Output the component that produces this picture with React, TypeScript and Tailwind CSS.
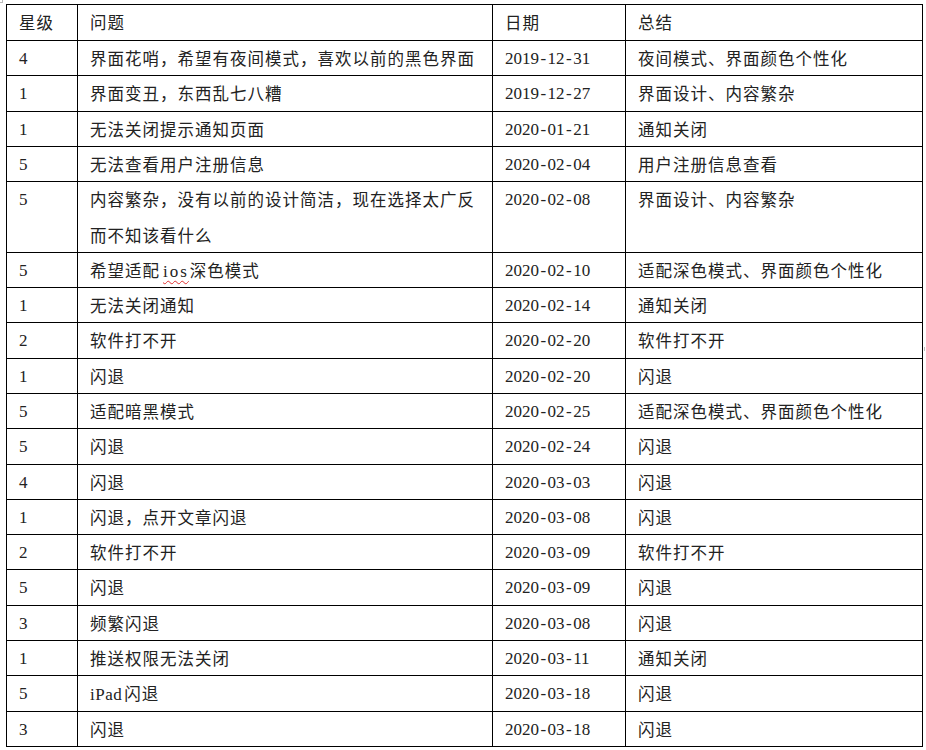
import React from "react";

type Row = { star: string; issue: React.ReactNode; date: string; sum: string; tall?: boolean };

function Ascii({ text }: { text: string }) {
  const bits = text.split(/(-)/);
  return (
    <span className="font-['Liberation_Serif',serif] text-[17px]">
      {bits.map((b, i) =>
        b === "-" ? (
          <span key={i} className="inline-block w-[8.6px] text-center">-</span>
        ) : (
          <React.Fragment key={i}>{b}</React.Fragment>
        )
      )}
    </span>
  );
}

function T({ text }: { text: string }) {
  const parts = text.match(/[\x20-\x7e]+|[^\x20-\x7e]+/g) || [];
  return (
    <>
      {parts.map((p, i) =>
        /^[\x20-\x7e]+$/.test(p) ? (
          <Ascii key={i} text={p} />
        ) : (
          <span key={i} className="font-['Noto_Sans_CJK_SC',sans-serif] text-[16.5px] tracking-[1px]">
            {p}
          </span>
        )
      )}
    </>
  );
}

const rows: Row[] = [
  { star: "4", issue: <T text="界面花哨，希望有夜间模式，喜欢以前的黑色界面" />, date: "2019-12-31", sum: "夜间模式、界面颜色个性化" },
  { star: "1", issue: <T text="界面变丑，东西乱七八糟" />, date: "2019-12-27", sum: "界面设计、内容繁杂" },
  { star: "1", issue: <T text="无法关闭提示通知页面" />, date: "2020-01-21", sum: "通知关闭" },
  { star: "5", issue: <T text="无法查看用户注册信息" />, date: "2020-02-04", sum: "用户注册信息查看" },
  {
    star: "5",
    issue: (
      <>
        <T text="内容繁杂，没有以前的设计简洁，现在选择太广反" />
        <br />
        <T text="而不知该看什么" />
      </>
    ),
    date: "2020-02-08",
    sum: "界面设计、内容繁杂",
    tall: true,
  },
  {
    star: "5",
    issue: (
      <>
        <T text="希望适配" />
        <span className="font-['Liberation_Serif',serif] text-[17px] ml-[3px] mr-[1px] tracking-[2px] underline decoration-wavy decoration-[#e03030] decoration-1 underline-offset-[3px]">
          ios
        </span>
        <T text="深色模式" />
      </>
    ),
    date: "2020-02-10",
    sum: "适配深色模式、界面颜色个性化",
  },
  { star: "1", issue: <T text="无法关闭通知" />, date: "2020-02-14", sum: "通知关闭" },
  { star: "2", issue: <T text="软件打不开" />, date: "2020-02-20", sum: "软件打不开" },
  { star: "1", issue: <T text="闪退" />, date: "2020-02-20", sum: "闪退" },
  { star: "5", issue: <T text="适配暗黑模式" />, date: "2020-02-25", sum: "适配深色模式、界面颜色个性化" },
  { star: "5", issue: <T text="闪退" />, date: "2020-02-24", sum: "闪退" },
  { star: "4", issue: <T text="闪退" />, date: "2020-03-03", sum: "闪退" },
  { star: "1", issue: <T text="闪退，点开文章闪退" />, date: "2020-03-08", sum: "闪退" },
  { star: "2", issue: <T text="软件打不开" />, date: "2020-03-09", sum: "软件打不开" },
  { star: "5", issue: <T text="闪退" />, date: "2020-03-09", sum: "闪退" },
  { star: "3", issue: <T text="频繁闪退" />, date: "2020-03-08", sum: "闪退" },
  { star: "1", issue: <T text="推送权限无法关闭" />, date: "2020-03-11", sum: "通知关闭" },
  {
    star: "5",
    issue: (
      <>
        <span className="font-['Liberation_Serif',serif] text-[17px] tracking-[0.5px] mr-[2px]">iPad</span>
        <T text="闪退" />
      </>
    ),
    date: "2020-03-18",
    sum: "闪退",
  },
  { star: "3", issue: <T text="闪退" />, date: "2020-03-18", sum: "闪退" },
];

const cell = "border-r border-b border-black pl-[12px] leading-[35.3px] text-[#222] whitespace-nowrap overflow-hidden";

export default function App() {
  return (
    <div className="w-[926px] h-[750px] bg-white relative overflow-hidden">
      <div className="pt-[4px] pl-[6px]">
        <div className="grid grid-cols-[71px_415px_133px_297px] w-[917px] border-l border-t border-black">
          <div className={`${cell} h-[36px] leading-[35px]`}><T text="星级" /></div>
          <div className={`${cell} h-[36px] leading-[35px]`}><T text="问题" /></div>
          <div className={`${cell} h-[36px] leading-[35px]`}><T text="日期" /></div>
          <div className={`${cell} h-[36px] leading-[35px]`}><T text="总结" /></div>
          {rows.map((r, i) => {
            const h = r.tall ? "h-[70.6px]" : "h-[35.3px]";
            return (
              <React.Fragment key={i}>
                <div className={`${cell} ${h}`}><T text={r.star} /></div>
                <div className={`${cell} ${h}`}>{r.issue}</div>
                <div className={`${cell} ${h}`}><T text={r.date} /></div>
                <div className={`${cell} ${h}`}><T text={r.sum} /></div>
              </React.Fragment>
            );
          })}
        </div>
      </div>
      <div className="absolute left-0 top-0 w-[3px] h-[3px] border-r border-b border-[#bbb]" />
      <div className="absolute left-[924px] top-[347px] w-[1px] h-[4px] bg-[#bbb]" />
    </div>
  );
}
